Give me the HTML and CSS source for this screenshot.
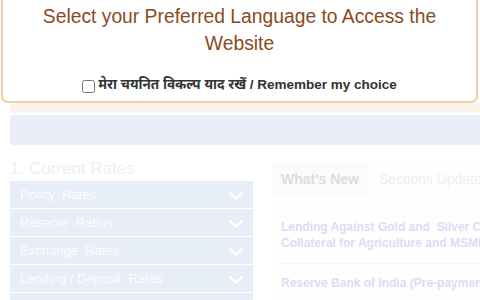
FILE: index.html
```html
<!DOCTYPE html>
<html>
<head>
<meta charset="utf-8">
<link rel="stylesheet" href="styles.css">
</head>
<body>
<div class="page">
  <div class="strip"></div>
  <div class="bluebar"></div>
  <div class="main">
    <div class="left">
      <h2 class="heading">1. Current Rates</h2>
      <div class="acc">
        <div class="row"><span>Policy&nbsp; Rates</span><svg class="chev" viewBox="0 0 16 9" width="16" height="9"><path d="M1 1 L8 7.5 L15 1" fill="none" stroke="#fff" stroke-width="2.2"/></svg></div>
        <div class="row"><span>Reserve&nbsp; Ratios</span><svg class="chev" viewBox="0 0 16 9" width="16" height="9"><path d="M1 1 L8 7.5 L15 1" fill="none" stroke="#fff" stroke-width="2.2"/></svg></div>
        <div class="row"><span>Exchange&nbsp; Rates</span><svg class="chev" viewBox="0 0 16 9" width="16" height="9"><path d="M1 1 L8 7.5 L15 1" fill="none" stroke="#fff" stroke-width="2.2"/></svg></div>
        <div class="row"><span>Lending / Deposit&nbsp; Rates</span><svg class="chev" viewBox="0 0 16 9" width="16" height="9"><path d="M1 1 L8 7.5 L15 1" fill="none" stroke="#fff" stroke-width="2.2"/></svg></div>
        <div class="row"></div>
      </div>
    </div>
    <div class="right">
      <div class="tabs">
        <div class="tab active">What's New</div>
        <div class="tab">Sections Update</div>
      </div>
      <div class="news">
        <a class="item"><span class="ln">Lending Against Gold and&nbsp; Silver Coins</span><span class="ln">Collateral for Agriculture and MSME Loans</span></a>
        <a class="item"><span class="ln">Reserve Bank of India (Pre-payment Charges)</span></a>
      </div>
    </div>
  </div>
</div>
<div class="modal">
  <p class="title">Select your Preferred Language to Access the Website</p>
  <label class="remember"><input type="checkbox" class="cb"><span>मेरा चयनित विकल्प याद रखें / Remember my choice</span></label>
</div>
</body>
</html>
```
FILE: styles.css
```css
html, body {
  margin: 0;
  padding: 0;
  background: #ffffff;
  font-family: "Liberation Sans", Arial, sans-serif;
  overflow: hidden;
  width: 480px;
  height: 300px;
}
.page {
  padding-left: 10px;
  padding-top: 103px;
}
.strip {
  height: 10px;
  background: #fdf3ea;
}
.bluebar {
  margin-top: 2px;
  height: 30px;
  background: #e9eef8;
  border-radius: 4px 0 0 4px;
}
.main {
  display: flex;
  gap: 19px;
  margin-top: 13px;
}
.left {
  width: 243px;
  flex: none;
}
.heading {
  margin: 0;
  font-weight: normal;
  font-size: 17px;
  line-height: 22px;
  color: #f0f0f0;
  height: 23px;
}
.acc {
  display: flex;
  flex-direction: column;
  gap: 1px;
}
.row {
  height: 27px;
  background: #e8eef7;
  display: flex;
  align-items: center;
  justify-content: space-between;
  padding: 0 9px 0 10px;
  color: #fbfcfe;
  font-size: 13px;
}
.chev {
  display: block;
  margin-top: 2px;
}
.right {
  flex: 1;
  min-width: 0;
  background: #fefefd;
  margin-top: 2px;
  height: 200px;
  overflow: hidden;
}
.tabs {
  display: flex;
  align-items: center;
  height: 36px;
  margin-top: 1px;
}
.tab {
  font-size: 14px;
  color: #efefef;
  padding: 0 6px 0 10px;
  height: 34px;
  line-height: 34px;
  white-space: nowrap;
}
.tab.active {
  background: #fcfbf9;
  color: #dddddd;
  font-weight: bold;
  padding: 0 10px 0 9px;
  width: 84px;
}
.news {
  padding: 22px 0 0 9px;
  display: flex;
  flex-direction: column;
  width: 300px;
}
.item {
  font-size: 12px;
  font-weight: bold;
  color: #dcdcf6;
  line-height: 16px;
  padding-bottom: 12px;
  margin-bottom: 11px;
  border-bottom: 1px dotted #ebebeb;
  display: flex;
  flex-direction: column;
}
.ln {
  white-space: nowrap;
}
.modal {
  position: absolute;
  left: 1px;
  top: -20px;
  width: 473px;
  height: 119px;
  background: #ffffff;
  border: 2px solid #efcfa8;
  border-radius: 7px;
  text-align: center;
}
.title {
  margin: 21px 0 0;
  padding: 0 20px;
  font-size: 19.3px;
  line-height: 27px;
  color: #8b4a1c;
}
.remember {
  display: inline-flex;
  align-items: center;
  margin-top: 20px;
  font-size: 13.5px;
  font-weight: bold;
  color: #333333;
  font-family: "Liberation Sans", "Noto Sans Devanagari", "Noto Sans", sans-serif;
}
.cb {
  width: 13px;
  height: 13px;
  margin: 0 3px 0 0;
}
```
